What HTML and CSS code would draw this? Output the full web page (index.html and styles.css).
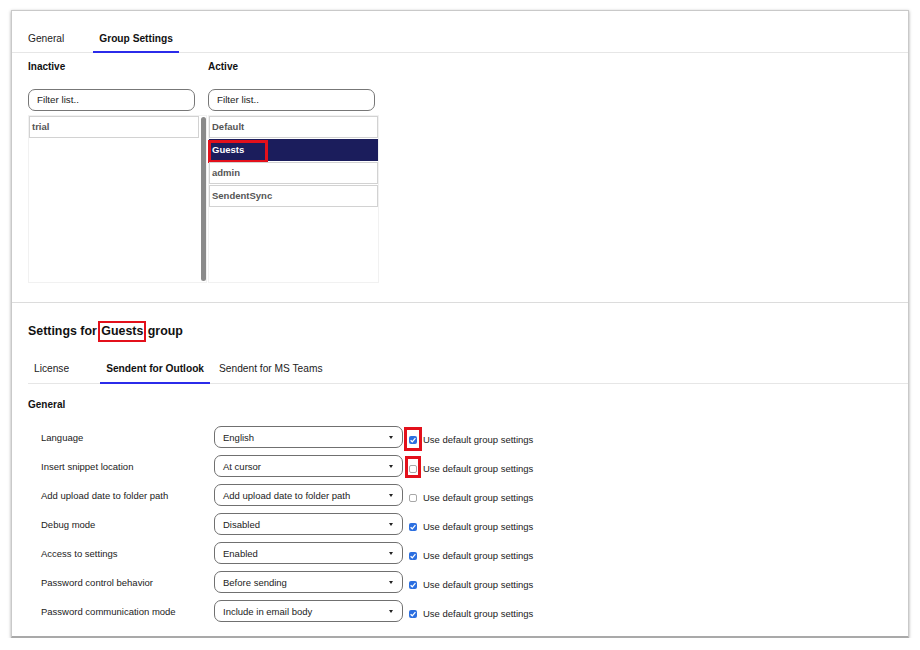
FILE: index.html
```html
<!DOCTYPE html>
<html>
<head>
<meta charset="utf-8">
<link rel="stylesheet" href="styles.css">
</head>
<body>
<div class="frame">
  <div class="tabs top">
    <div class="tab">General</div>
    <div class="tab on">Group Settings</div>
  </div>

  <section class="groups">
    <div class="col col-inactive">
      <div class="col-title">Inactive</div>
      <div class="filter">Filter list..</div>
      <div class="listwrap">
        <div class="list">
          <div class="item">trial</div>
        </div>
        <div class="scrollbar"></div>
      </div>
    </div>
    <div class="col col-active">
      <div class="col-title">Active</div>
      <div class="filter">Filter list..</div>
      <div class="listwrap">
        <div class="list">
          <div class="item">Default</div>
          <div class="item selected">Guests<span class="redbox redbox-item"></span></div>
          <div class="item">admin</div>
          <div class="item">SendentSync</div>
        </div>
      </div>
    </div>
  </section>

  <section class="settings">
    <h2 class="heading">Settings for <span class="mark">Guests</span> group</h2>
    <div class="tabs sub">
      <div class="tab t-license">License</div>
      <div class="tab on t-outlook">Sendent for Outlook</div>
      <div class="tab">Sendent for MS Teams</div>
    </div>
    <h3 class="subheading">General</h3>
    <div class="rows">
      <div class="row">
        <div class="label">Language</div>
        <div class="select"><span>English</span><i class="caret"></i></div>
        <div class="check"><span class="box checked"><svg viewBox="0 0 8 8"><path d="M1.6 4.2 L3.3 5.8 L6.4 2.2" fill="none" stroke="#fff" stroke-width="1.3"/></svg></span><span class="redbox redbox-c1"></span></div>
        <div class="check-label">Use default group settings</div>
      </div>
      <div class="row">
        <div class="label">Insert snippet location</div>
        <div class="select"><span>At cursor</span><i class="caret"></i></div>
        <div class="check"><span class="box"></span><span class="redbox redbox-c2"></span></div>
        <div class="check-label">Use default group settings</div>
      </div>
      <div class="row">
        <div class="label">Add upload date to folder path</div>
        <div class="select"><span>Add upload date to folder path</span><i class="caret"></i></div>
        <div class="check"><span class="box"></span></div>
        <div class="check-label">Use default group settings</div>
      </div>
      <div class="row">
        <div class="label">Debug mode</div>
        <div class="select"><span>Disabled</span><i class="caret"></i></div>
        <div class="check"><span class="box checked"><svg viewBox="0 0 8 8"><path d="M1.6 4.2 L3.3 5.8 L6.4 2.2" fill="none" stroke="#fff" stroke-width="1.3"/></svg></span></div>
        <div class="check-label">Use default group settings</div>
      </div>
      <div class="row">
        <div class="label">Access to settings</div>
        <div class="select"><span>Enabled</span><i class="caret"></i></div>
        <div class="check"><span class="box checked"><svg viewBox="0 0 8 8"><path d="M1.6 4.2 L3.3 5.8 L6.4 2.2" fill="none" stroke="#fff" stroke-width="1.3"/></svg></span></div>
        <div class="check-label">Use default group settings</div>
      </div>
      <div class="row">
        <div class="label">Password control behavior</div>
        <div class="select"><span>Before sending</span><i class="caret"></i></div>
        <div class="check"><span class="box checked"><svg viewBox="0 0 8 8"><path d="M1.6 4.2 L3.3 5.8 L6.4 2.2" fill="none" stroke="#fff" stroke-width="1.3"/></svg></span></div>
        <div class="check-label">Use default group settings</div>
      </div>
      <div class="row">
        <div class="label">Password communication mode</div>
        <div class="select"><span>Include in email body</span><i class="caret"></i></div>
        <div class="check"><span class="box checked"><svg viewBox="0 0 8 8"><path d="M1.6 4.2 L3.3 5.8 L6.4 2.2" fill="none" stroke="#fff" stroke-width="1.3"/></svg></span></div>
        <div class="check-label">Use default group settings</div>
      </div>
    </div>
  </section>
</div>
</body>
</html>
```
FILE: styles.css
```css
* { box-sizing: border-box; }
html, body { margin: 0; padding: 0; background: #fff; }
body {
  font-family: "Liberation Sans", Arial, Helvetica, sans-serif;
  color: #222;
  padding: 10px 0 0 11px;
}
.frame {
  width: 898px;
  height: 628px;
  border: 1px solid #c9c9c9;
  border-bottom: 2px solid #a9a9a9;
  box-shadow: 0 1px 3px rgba(0,0,0,0.35);
  background: #fff;
  overflow: hidden;
}

/* tabs */
.tabs {
  display: flex;
  border-bottom: 1px solid #e6e6e6;
}
.tabs.top {
  height: 42px;
  padding-left: 10px;
  gap: 23px;
  align-items: flex-end;
}
.tab {
  font-size: 10.2px;
  line-height: 14px;
  padding: 0 6px 5px;
  border-bottom: 2px solid transparent;
  margin-bottom: -1px;
  color: #222;
}
.tab.on {
  font-weight: bold;
  border-bottom-color: #2b2bea;
  color: #111;
}

/* group lists */
.groups {
  display: flex;
  gap: 1px;
  padding: 7px 0 19px 16px;
  border-bottom: 1px solid #dcdcdc;
}
.col-inactive { width: 179px; }
.col-active { width: 171px; }
.col-title {
  font-size: 10px;
  font-weight: bold;
  line-height: 14px;
  color: #111;
}
.filter {
  margin-top: 15px;
  width: 167px;
  height: 22px;
  border: 1px solid #777;
  border-radius: 7px;
  padding-left: 8px;
  font-size: 9.8px;
  line-height: 20px;
  color: #222;
}
.listwrap {
  margin-top: 4px;
  height: 168px;
  display: flex;
  border: 1px solid #f1f1f1;
}
.list { width: 170px; }
.col-active .list { width: 169px; }
.item {
  position: relative;
  height: 22px;
  border: 1px solid #d2d2d2;
  margin-bottom: 1px;
  padding-left: 2px;
  font-size: 9.5px;
  font-weight: bold;
  line-height: 20px;
  color: #555;
}
.item.selected {
  background: #1b1d5c;
  border-color: #1b1d5c;
  color: #fff;
}
.scrollbar {
  width: 5px;
  height: 164px;
  margin: 1px 0 0 2px;
  border-radius: 3px;
  background: #8a8a8a;
}

/* annotations */
.redbox {
  position: absolute;
  border: 3px solid #e3101b;
  pointer-events: none;
}
.redbox-item { left: -2px; top: 0px; width: 60px; height: 23px; }
.mark {
  outline: 2.5px solid #e3101b;
  outline-offset: 0px;
  padding: 1px 1px 2px 1px;
}

/* settings */
.settings {
  padding-left: 16px;
}
.heading {
  margin: 20px 0 0;
  font-size: 12.4px;
  line-height: 16px;
  font-weight: bold;
  color: #111;
}
.tabs.sub {
  margin-top: 8px;
  height: 37px;
  align-items: flex-end;
}
.tabs.sub .tab { padding-bottom: 6px; }
.t-license { margin-right: 25px; }
.t-outlook { margin-right: 3px; }
.subheading {
  margin: 14px 0 0;
  font-size: 10px;
  line-height: 14px;
  font-weight: bold;
  color: #111;
}
.rows {
  margin-top: 14px;
  padding-left: 13px;
  display: flex;
  flex-direction: column;
  gap: 7px;
}
.row {
  display: flex;
  align-items: center;
  height: 22px;
}
.label {
  width: 173px;
  font-size: 9.5px;
  color: #222;
}
.select {
  width: 189px;
  height: 22px;
  border: 1px solid #707070;
  border-radius: 7px;
  padding: 0 9px 0 8px;
  display: flex;
  align-items: center;
  justify-content: space-between;
  font-size: 9.5px;
  color: #222;
}
.caret {
  width: 0;
  height: 0;
  border-left: 2.5px solid transparent;
  border-right: 2.5px solid transparent;
  border-top: 3px solid #222;
}
.check {
  position: relative;
  margin-left: 6px;
  margin-top: 6px;
  width: 8px;
  height: 8px;
}
.box {
  display: block;
  width: 8px;
  height: 8px;
  border: 1px solid #a8a8a8;
  border-radius: 2px;
  background: #fff;
}
.box.checked {
  border: none;
  background: #2c6fe0;
}
.box svg { display: block; width: 8px; height: 8px; }
.check-label {
  margin-left: 6px;
  margin-top: 5px;
  font-size: 9.5px;
  color: #222;
}
.redbox-c1 { left: -5px; top: -9px; width: 18px; height: 24px; }
.redbox-c2 { left: -4px; top: -9px; width: 16px; height: 22px; }
```
